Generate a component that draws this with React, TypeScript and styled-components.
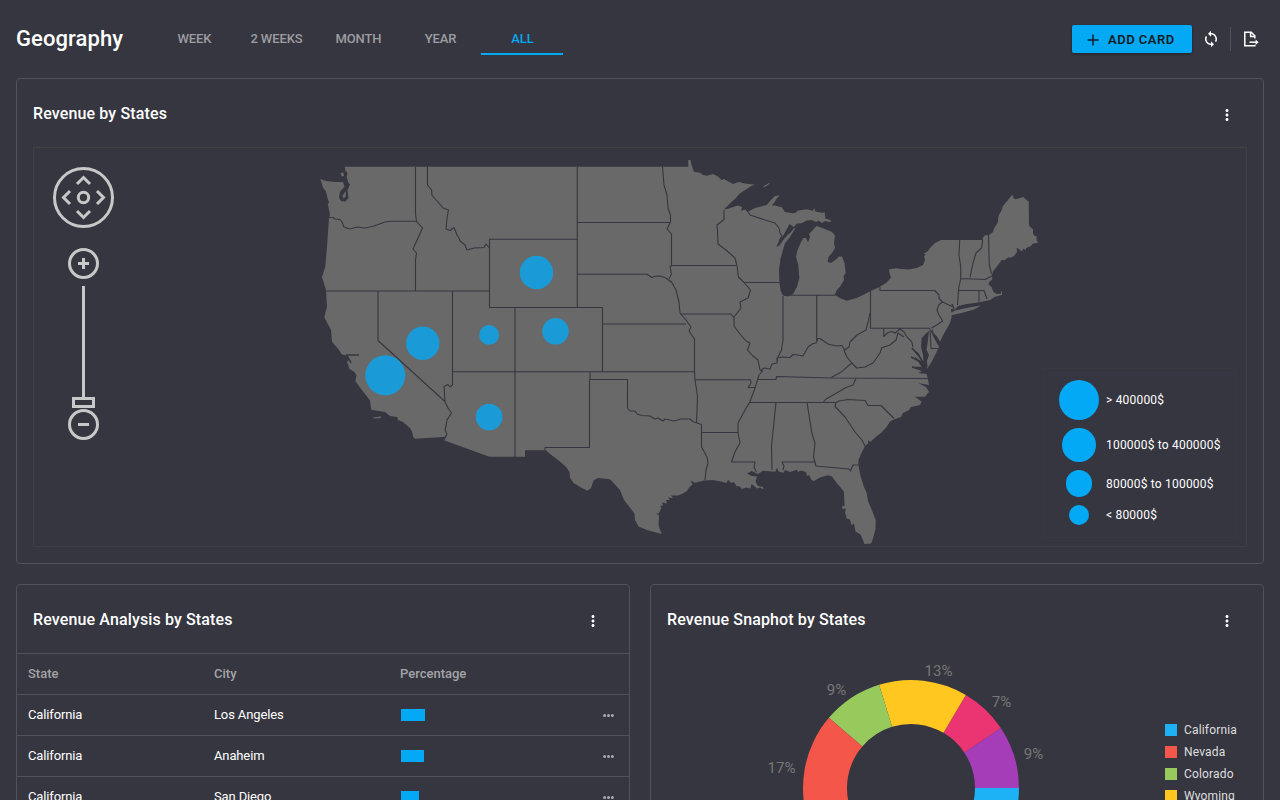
import React from 'react';
import styled, { createGlobalStyle } from 'styled-components';
import { MdSync, MdMoreVert } from 'react-icons/md';

const GlobalStyle = createGlobalStyle`
  * { box-sizing: border-box; }
  html, body { margin: 0; height: 800px; overflow: hidden; background: #363640; }
  body { font-family: Roboto, "Liberation Sans", sans-serif; font-size: 13px; color: #fff; }
`;

const Page = styled.main`
  height: 800px;
  overflow: hidden;
  padding: 0 16px;
  background: #363640;
`;

const Toolbar = styled.header`
  display: flex;
  align-items: center;
  height: 78px;
`;

const Title = styled.h1`
  width: 137px;
  margin: 0;
  font-size: 22px;
  font-weight: 500;
  line-height: 28px;
  letter-spacing: 0.08px;
`;

const Tabs = styled.nav`
  display: flex;
`;

const Tab = styled.button<{ $active?: boolean }>`
  width: 82px;
  height: 32px;
  padding: 2px 0 0 1px;
  border: 0;
  border-bottom: 2px solid ${(p) => (p.$active ? '#03a9f4' : 'transparent')};
  background: none;
  color: ${(p) => (p.$active ? '#03a9f4' : '#9d9da1')};
  font: 500 13px/28px Roboto, sans-serif;
  letter-spacing: -0.1px;
  white-space: nowrap;
`;

const Actions = styled.div`
  display: flex;
  align-items: center;
  margin: 0 -7px 0 auto;
`;

const AddButton = styled.button`
  display: flex;
  align-items: center;
  gap: 9px;
  width: 120px;
  height: 28px;
  padding: 1px 0 0 15px;
  border: 0;
  border-radius: 2px;
  background: #03a9f4;
  color: #101c24;
  font: 600 13px/27px Roboto, sans-serif;
  letter-spacing: 0.5px;
  white-space: nowrap;
  box-shadow: 0 1px 3px rgba(0, 0, 0, 0.4);
`;

const IconButton = styled.button<{ $width: number }>`
  display: flex;
  align-items: center;
  justify-content: center;
  width: ${(p) => p.$width}px;
  height: 28px;
  padding: 0;
  border: 0;
  background: none;
  color: #fff;
`;

const Divider = styled.span`
  width: 1px;
  height: 24px;
  background: #515159;
`;

const Card = styled.section<{ $height: number }>`
  height: ${(p) => p.$height}px;
  border: 1px solid #515159;
  border-radius: 4px;
`;

const CardHeader = styled.div`
  display: flex;
  align-items: center;
  justify-content: space-between;
  height: 68px;
  padding: 2px 27.5px 0 16px;
`;

const CardTitle = styled.h2`
  margin: 0;
  font-size: 16px;
  font-weight: 500;
  line-height: 20px;
  letter-spacing: 0.13px;
`;

const MenuIcon = styled(MdMoreVert)`
  width: 18px;
  height: 18px;
  margin-top: 2px;
`;

const MapFrame = styled.div`
  position: relative;
  height: 400px;
  margin: 0 16px;
  border: 1px solid #404043;
`;

const MapSvg = styled.svg`
  display: block;
  width: 1212px;
  height: 398px;
`;

const MapLegend = styled.ul`
  position: absolute;
  right: 10px;
  bottom: 8px;
  display: flex;
  flex-direction: column;
  gap: 8px;
  width: 193px;
  height: 170px;
  margin: 0;
  padding: 11px 0 0 15px;
  list-style: none;
  border: 1px solid #39393f;
`;

const MapLegendItem = styled.li<{ $height: number }>`
  display: flex;
  align-items: center;
  gap: 7px;
  height: ${(p) => p.$height}px;
  font-size: 12px;
  letter-spacing: 0.2px;
`;

const BubbleCell = styled.span`
  display: flex;
  justify-content: center;
  width: 40px;
`;

const Bubble = styled.span<{ $size: number }>`
  width: ${(p) => p.$size}px;
  height: ${(p) => p.$size}px;
  border-radius: 50%;
  background: #03a9f4;
`;

const CardsRow = styled.div`
  display: grid;
  grid-template-columns: 1fr 1fr;
  gap: 20px;
  margin-top: 20px;
`;

const Row = styled.div<{ $head?: boolean }>`
  display: grid;
  grid-template-columns: 186px 186px 1fr auto;
  align-items: center;
  height: 41px;
  padding: 0 15px 2px 11px;
  border-top: 1px solid #515159;
  color: ${(p) => (p.$head ? '#a3a3a7' : '#fff')};
  font-weight: ${(p) => (p.$head ? 500 : 400)};
  letter-spacing: ${(p) => (p.$head ? 0 : '-0.13px')};
`;

const Bar = styled.span`
  height: 12px;
  margin: 1px 0 0 1px;
  background: #03a9f4;
`;

const Dots = styled.svg`
  width: 11px;
  height: 4px;
  margin-top: 2px;
  fill: #a9a9ad;
`;

const ChartBody = styled.div`
  display: flex;
  height: 270px;
`;

const Donut = styled.svg`
  width: 514px;
  height: 270px;
`;

const ChartLegend = styled.ul`
  display: flex;
  flex-direction: column;
  gap: 6px;
  margin: 0;
  padding: 69px 0 0;
  list-style: none;
`;

const ChartLegendItem = styled.li`
  display: flex;
  align-items: center;
  gap: 7px;
  height: 16px;
  color: #dededf;
  font-size: 12px;
  letter-spacing: 0.16px;
`;

const Swatch = styled.span<{ $color: string }>`
  width: 12px;
  height: 12px;
  background: ${(p) => p.$color};
`;

const MAINLAND =
  'M344.7 166.7H688.3V160H690.5L691.5 165L694 171.7L700 172.7L703 175L707 175.7L713 174L718 176.5L721.5 180L724 179L727 180.7L733 184L737 182.5L740 182L743 183.3L755 184.7L751 186L748 188.3L740 193.3L735 199L731.7 201.7L724 209.5L728 208.7L738 205.5L742 207L741 210.7L745 209.5L747.5 212L755 208L766.7 205L771 200L775 196L779.5 195.3L776 199.5L774.5 202.5L771.5 205.5L775 205.5L781.7 207.3L785 212L793 213.3L796 212.5L798 210.5L802 210L806.7 209.3L813 210.7L814 208L815.5 211.5L823 213L824.5 211.5L825.5 219L828 219L831.7 221.3L829 222L825 221L822 223L818.5 220.7L816 222L811.7 220L806.7 220.5L801.7 223.3L796.7 223.5L794 227L791.7 225.5L789.5 224L787.3 228.3L783.5 235L778.5 242L776.3 247L779.3 245.5L784 239L788 234.5L790 233.3L794 228.3L795.5 228L790 237L785 243.3L783 250L780.5 259L779 270L779.3 281.7L780.7 291L783 295.5L788 296.5L793 294L797 286.7L799.3 278L798.3 265L796 256.7L797.5 250L801 242L803.5 238L806 238L808 242.3L810 237L809 234L813 230L814.5 228L816.7 226L823 228.3L831.7 231.7L835 235.5L834 243L835 248L832 253L828.5 256.7L827.7 262L831 263L836.5 259L839 256.5L842 256.5L844.5 263L845.7 273L843.5 276L844 280L840 286.7L836.5 290.5L834.7 295L841 298.5L846.7 300.8L856.7 298L865 294L870.7 291L880 286.7L886.7 282.5L891 277.5L889.5 273L889 269.3L896.7 268.2L901 269L909 269.5L916.7 268L923 265L925 260L924 256L926 254.5L923.5 254L928 251L930 248L935 243L941 240H982.7L983 237.5L985 235.3H988.5L990 234.3L993 232L994 228.5L997.7 222.7L998.5 216L1001.7 210L1003 206L1008 200L1011.7 195.3L1013.5 196L1013 198L1015.7 199.3L1023 197L1028.7 201.7L1029 225.5L1033 229.5V233.5L1034.5 236L1036.5 236V240L1038 242.7L1033 243.5L1031 246L1026 248L1025.5 250.5L1023.5 248.5L1022 251.5L1019 249L1016.7 248L1017 252L1014 256L1011 257.5L1008 257.5L1005 260L1001.7 260L996.7 266.7L993 271.5L991.7 276L992.5 279L989 282.5L988.5 284.5L991.5 287L993.5 292L997 294L1001.5 293.5L1000.5 291L1002 292L1002 295L995 296.7L990 300L986 301L978 302.5L966.7 304L958 306L955 309.5L951 309L951.7 316.7L950 323L945 331.7L941.7 338L940 341.7L937 336.5L933.5 333L932.5 328.5L931 331.7L934 338L939 346.7L936.7 351.7L931.7 361.7L927 369L926.5 362L929 355L926.5 350L928 340L929 331L926.5 333L921.7 338L921 346.7L923 355L923.5 361.7L918.5 353L911.5 348L918 356L921.7 362L914 356L921.7 366.7L911.7 366.7L918 369L922 371L918 373L926.7 374L927.7 378.3L929 385L918 383L926 387L929 391.7L925 396.7L915 396.7L921.7 401.7L920 405L911 407L909 410L903 413L901 417L895 419L890 421.5L886.7 426.7L881 433L877 436L870.5 441.7L868 440.5V443.5L865 446L861 454L858.5 460L858.3 465L860.7 477L864 487L866.7 493L868 501L871 508L875.7 520L875.5 529L872.5 540L871 543.5L864.5 544L860.5 534.5L855.5 531.5L854 523.5L851.5 525L850 519.5L846.7 518.5L845 512L846 509L842 508.5L842.5 505.5L844.5 506.5L844 491.7L841 488L836.7 483L832 476.5L828 475.3L820 477.5L814 481L811.5 480L809 475L807 476L806 472L801 470.5L798 472L797 469.7L790 472L785 470L783.5 472.7L778.5 471.5L777 467.7L775.5 471.5L771.7 471.5L763 470.7L758 474L751.7 471L747 473.5L751.7 476L757 476.5L755.5 481.7L758 486L763 487L763.5 489.5L760 487.5L757 488.5L754 486L751.5 484L750.5 488.5L746 487.5L742 489L739 486L736.7 486.5L734 482L731 483L728 479.7L726.5 483L721 481.5L713 480L704 480.5L695 482.7L690.5 480.5L692.5 484.5L689 487.5L687 491L683 493.5L678 495.5L671 495.5L673 498L668 497.5L670 500L666 500L667 503.5L662 502.5L663 505.5L660 506L661.5 508L660 511L658 514L655 513L659 515.5L658.5 525L660 530L662 534L653 531.7L647 530L638.5 526.5L635 520L634.5 513.5L629.5 507L624 500L620 490L615 484.5L610 479.3L598 478L593.5 480.5L591 488L587.5 490.7L581 487.5L573.5 483L570 477.5L569.5 472L566.5 467.5L560 461.5L550 454L546 450.3H525V456.7H489.3L443.3 440L446 436.7L415 438.7L413.3 437L412 431.5L410 428L403 422L398 420L397.3 417L390 416L385 412L379 411L371.2 409.7L370 400.5L367 396.5L361 389L355.3 381L356.5 375.5L354.5 372L349.5 369L347 361.7L349 360L346.5 355.5L342 354.5L339 350L332 341.7L331 330L325.5 319.5L324.3 317L327 306.7L326 290L322 277L325.3 266.7L327 246.7L329 218L330 215L327.7 203.5L329.5 203L328 200L326 191.5L323 187.5L320.3 179L326 181L335 182L343 182L344.5 186.7L340 191.5L339 197.5L341 201L345.5 201.5L348.5 198L347.5 190L350 184.5L348 182L346.7 176.7L347.5 173L345.5 171ZM955 310.5L965 308.3L973 306.7L981 305.5L974 309.5L961.7 313L950 315.5L948 314.5ZM763 186.5L769 183L770 183.2L765 187ZM340.5 173L343.5 172.5L344 176L341.5 176.5ZM342.5 196L345.5 191L346 196L343.5 198.5ZM373 417.5L381 416.5V418L374 418.5Z';

const BORDERS = [
  'M329 217.5H333L335 219L340 219.5L342 222L344 227L350 229L357 227L365 228L374 226L385 222L391 221.3H416.5',
  'M415.5 167V214L416.5 221.3L422.5 228L419 236L413 249L416.5 253L415.5 260V290.5',
  'M325 291H489.5',
  'M427.5 167V185L431.5 190L432 195.5L438 202L443 208L448.5 210L447 218L446 229L450 230.5L454 227.5L457 235L459 238L460 241L465 245L467 250L474 248L484 247.5L486 244L489 247.5',
  'M489.5 239.3H577.3V307.5H489.5Z',
  'M577.3 167V239.3M577.3 222.5H670.5',
  'M577.3 274.3H647L652 277.5L655 276.3L660 276L666 278L671 282',
  'M662.5 167L664 185L667 195L668 208L670.5 215V222L667 229L671.5 234V265.5L670 267L671.5 274L669 279',
  'M671.5 265.5H736',
  'M671 281L676 290L679 302L680 313L686 320L691 327L689 331L694.5 339V372',
  'M680 314H731L733.5 317',
  'M602.5 324H686',
  'M452.5 371.8H694.5M515 307.5H602.5V371.8',
  'M452.5 291V385L450 387L448 384.5L444 386.5L445 402L448 408L451.5 413L447 420L446 426L445 430L447 434L444 440',
  'M378 291V340.5L445.5 402',
  'M515 307.5V457',
  'M590 372V380M545 450V447.5H589.5V379.5H627.5V408L630 411L635 411L637 414L642 415.5L650 416L655 419L658 418L663 421L665 419L674 421L681 419L690 419L693 421.5L697 423L701.5 424.5V447L707 457L708 463L706 470L705 480',
  'M694.5 372L695 380L697.5 396L696.5 423',
  'M695 379.7H750.5L751 383L748 387.5H756',
  'M702 432.5H738',
  'M724 210V219.5L717 225L717.5 231L718 244L726 250L735 258L737 266L738.5 277L744 282.5L750.5 290L748 298L740 302L741 308L734 317V326L740 334L746 341L750 343L747.5 350L753 356L758 360L760 370L762.7 371L759 375L757 381.7L755 388L750 401.7L745 410L738 423V433L740 443L735 451.7L731.5 462H755L754 467L756.5 472',
  'M744 282.5H779.5',
  'M748 212L750 215L765 220L775 223L779 228L780 233L782 236L779 241',
  'M783 296V340L781.5 350L777.5 358L777 363',
  'M760.5 371L764 368L770 369L772 364L777 363V358L782 357L790 357.5L793 354.5L798 355L803 356L808 347L812 344L816 343L818 338.5L820 338.5L828 344L836 346L842 345.5L844.5 350L849 347L850 342L857 335L866 330L868 322L870 313',
  'M784 295.3H835M816.7 295.3V342',
  'M870.5 291V328.3H930',
  'M880 287V290.5H934.7L939 295V298.5L942.5 302L952 306.5',
  'M942.5 302L939 304.5L937 310L939 315L942.7 321L936.7 325L931.5 328',
  'M930 328.5L931 348.5H938',
  'M959.7 240L959 255L960.7 266.7V279L958.7 288L957.5 305',
  'M982.7 240L981.5 248L976 253L973 263L970 277.5',
  'M960.7 278.5L985 279.5L992 276',
  'M988.5 235L989.3 265L991.5 274',
  'M958.7 290.5H984L987 299M979 290.5V301.5',
  'M883.7 328.5V336.5L888 332.5L892 331.5L895 333L900 329L904 332L907 337L911.7 341.7L913 347',
  'M904 337L898 333L896 340L890 345L881.7 347.7L880 353L873 363L865 367L856.7 368L851.7 363L846.7 356.7L844 350',
  'M851.7 363L841.7 371.7L831.7 377.3',
  'M757 379.5H776L776.5 376.5L832 378L928 378.5',
  'M856 378.5L853 385L845 388L835 394L826 399L823 402.5',
  'M749 402.5H836L835 406.5L845 417L855 432L862 440L865 446',
  'M836 402.7L839 401L848 399.5L865 400.5L868 405.5H881L894 418.5',
  'M776 402.5L771.5 446L772 470',
  'M807 402.5L812 434L815 443L813.5 457L816 466L849 469L850.5 471L853 465H858',
  'M783 470L784 466L782 462H815',
].join('');

const CREEKS = 'M359 355H347L351 363M918 355L912 348M921 362L911 357M925 342L923 352M927 367L924 353M925 371L912 367M952 304L954 309';

const MARKERS = [
  [536.5, 272.5, 16.7],
  [422.8, 343.3, 16.7],
  [385.3, 375.3, 20],
  [489.1, 335, 10],
  [555.5, 331.3, 13.3],
  [489.1, 417, 13.3],
];

const BUBBLES = [
  { label: '> 400000$', size: 40, height: 40 },
  { label: '100000$ to 400000$', size: 33.3, height: 34 },
  { label: '80000$ to 100000$', size: 26.6, height: 27 },
  { label: '< 80000$', size: 20, height: 20 },
];

const CITIES = [
  { state: 'California', city: 'Los Angeles', width: 24 },
  { state: 'California', city: 'Anaheim', width: 23 },
  { state: 'California', city: 'San Diego', width: 18 },
];

const STATES = [
  { name: 'California', color: '#1db2f5' },
  { name: 'Nevada', color: '#f5564a' },
  { name: 'Colorado', color: '#97c95c' },
  { name: 'Wyoming', color: '#ffc720' },
];

const SLICES = [
  { from: 0, to: 33.75, color: '#a63db8' },
  { from: 33.75, to: 59.5, color: '#eb3573' },
  { from: 59.5, to: 107.2, color: '#ffc720' },
  { from: 107.2, to: 139.5, color: '#97c95c' },
  { from: 139.5, to: 200, color: '#f5564a' },
  { from: 200, to: 360, color: '#1db2f5' },
];

const SLICE_LABELS = [
  { text: '13%', x: 938.5, y: 676 },
  { text: '9%', x: 836.5, y: 695 },
  { text: '7%', x: 1001.5, y: 707 },
  { text: '9%', x: 1033.5, y: 759 },
  { text: '17%', x: 781.5, y: 773 },
];

function slicePath(from: number, to: number) {
  const point = (radius: number, degrees: number) => {
    const a = (degrees * Math.PI) / 180;
    return `${911 + radius * Math.cos(a)} ${788 - radius * Math.sin(a)}`;
  };
  return `M${point(108, from)}A108 108 0 0 0 ${point(108, to)}L${point(64, to)}A64 64 0 0 1 ${point(64, from)}Z`;
}

function ExportIcon() {
  return (
    <svg width="18" height="18" viewBox="0 0 18 18" fill="none" stroke="#fff" strokeWidth="1.5">
      <path d="M12.8 8.5V5.8L9.2 2.2H2.8V15.8H12.8V14.8" />
      <path d="M8.6 2.2V6.4H12.8" />
      <path d="M7.5 12.2H15" />
      <path d="M13.6 9.4L16.6 12.2L13.6 15Z" fill="#fff" stroke="none" />
    </svg>
  );
}

function StatesMap() {
  return (
    <MapSvg viewBox="34 148 1212 398">
      <path d={MAINLAND} fill="#696969" />
      <path d={BORDERS} fill="none" stroke="#363640" strokeWidth="1.1" strokeLinejoin="round" />
      <path d={CREEKS} fill="none" stroke="#363640" strokeWidth="1.6" />
      {MARKERS.map(([x, y, r]) => (
        <circle key={`${x}-${y}`} cx={x} cy={y} r={r} fill="#1a9bd7" />
      ))}
      <g fill="none" stroke="#c8c8c8" strokeWidth="3">
        <circle cx="83.5" cy="197.5" r="29" />
        <circle cx="83.5" cy="197.5" r="5.2" />
        <path d="M77 184L83.5 177.5L90 184M77 211L83.5 217.5L90 211M70 191L63.5 197.5L70 204M97 191L103.5 197.5L97 204" />
        <circle cx="83.5" cy="263.5" r="14" />
        <path d="M78 263.5H89M83.5 258V269" />
        <path d="M83.5 286V398" />
        <rect x="73.5" y="398.5" width="20" height="8" />
        <circle cx="83.5" cy="424.5" r="14" />
        <path d="M78 424.5H89" />
      </g>
    </MapSvg>
  );
}

export default function App() {
  return (
    <Page>
      <GlobalStyle />
      <Toolbar>
        <Title>Geography</Title>
        <Tabs>
          {['WEEK', '2 WEEKS', 'MONTH', 'YEAR', 'ALL'].map((label) => (
            <Tab key={label} $active={label === 'ALL'}>
              {label}
            </Tab>
          ))}
        </Tabs>
        <Actions>
          <AddButton>
            <svg width="12" height="12" viewBox="0 0 12 12" stroke="currentColor" strokeWidth="1.5">
              <path d="M6 .5V11.5M.5 6H11.5" />
            </svg>
            ADD CARD
          </AddButton>
          <IconButton $width={38}>
            <MdSync size={18} />
          </IconButton>
          <Divider />
          <IconButton $width={40}>
            <ExportIcon />
          </IconButton>
        </Actions>
      </Toolbar>
      <Card $height={486}>
        <CardHeader>
          <CardTitle>Revenue by States</CardTitle>
          <MenuIcon />
        </CardHeader>
        <MapFrame>
          <StatesMap />
          <MapLegend>
            {BUBBLES.map((b) => (
              <MapLegendItem key={b.label} $height={b.height}>
                <BubbleCell>
                  <Bubble $size={b.size} />
                </BubbleCell>
                {b.label}
              </MapLegendItem>
            ))}
          </MapLegend>
        </MapFrame>
      </Card>
      <CardsRow>
        <Card $height={486}>
          <CardHeader>
            <CardTitle>Revenue Analysis by States</CardTitle>
            <MenuIcon />
          </CardHeader>
          <Row $head>
            <span>State</span>
            <span>City</span>
            <span>Percentage</span>
          </Row>
          {CITIES.map((c) => (
            <Row key={c.city}>
              <span>{c.state}</span>
              <span>{c.city}</span>
              <Bar style={{ width: c.width }} />
              <Dots viewBox="0 0 11 4">
                <circle cx="1.6" cy="2.4" r="1.5" />
                <circle cx="5.5" cy="2.4" r="1.5" />
                <circle cx="9.4" cy="2.4" r="1.5" />
              </Dots>
            </Row>
          ))}
        </Card>
        <Card $height={486}>
          <CardHeader>
            <CardTitle>Revenue Snaphot by States</CardTitle>
            <MenuIcon />
          </CardHeader>
          <ChartBody>
            <Donut viewBox="651 653 514 270">
              {SLICES.map((s) => (
                <path key={s.from} d={slicePath(s.from, s.to)} fill={s.color} />
              ))}
              <g fill="#767676" fontSize="15" textAnchor="middle">
                {SLICE_LABELS.map((l) => (
                  <text key={l.x} x={l.x} y={l.y}>
                    {l.text}
                  </text>
                ))}
              </g>
            </Donut>
            <ChartLegend>
              {STATES.map((s) => (
                <ChartLegendItem key={s.name}>
                  <Swatch $color={s.color} />
                  {s.name}
                </ChartLegendItem>
              ))}
            </ChartLegend>
          </ChartBody>
        </Card>
      </CardsRow>
    </Page>
  );
}
